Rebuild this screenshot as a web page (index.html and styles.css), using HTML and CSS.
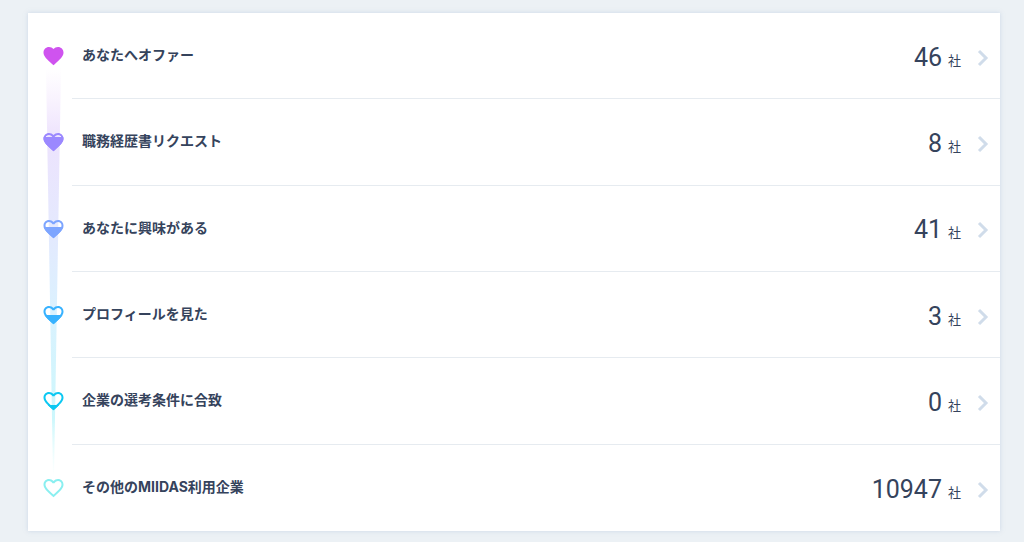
FILE: index.html
```html
<!DOCTYPE html>
<html lang="ja">
<head>
    <meta charset="UTF-8">
    <meta name="viewport" content="width=device-width, initial-scale=1.0">
    <title>MIIDAS</title>
    <link rel="stylesheet" href="styles.css">
</head>
<body>
    <!-- Heart shapes shared by every row -->
    <svg class="defs" width="0" height="0" aria-hidden="true">
        <defs>
            <path id="heart-solid" d="M12 21.35l-1.45-1.32C5.4 15.36 2 12.28 2 8.5 2 5.42 4.42 3 7.5 3c1.74 0 3.41.81 4.5 2.09C13.09 3.81 14.76 3 16.5 3 19.58 3 22 5.42 22 8.5c0 3.78-3.4 6.86-8.55 11.54L12 21.35z"/>
            <path id="heart-line" d="M16.5 3c-1.74 0-3.41.81-4.5 2.09C10.91 3.81 9.24 3 7.5 3 4.42 3 2 5.42 2 8.5c0 3.78 3.4 6.86 8.55 11.54L12 21.35l1.45-1.32C18.6 15.36 22 12.28 22 8.5 22 5.42 19.58 3 16.5 3zm-4.4 15.55l-.1.1-.1-.1C7.14 14.24 4 11.39 4 8.5 4 6.5 5.5 5 7.5 5c1.54 0 3.04.99 3.57 2.36h1.87C13.46 5.99 14.96 5 16.5 5c2 0 3.5 1.5 3.5 3.5 0 2.89-3.14 5.74-7.9 10.05z"/>
            <clipPath id="fill-80"><rect x="0" y="7" width="24" height="17"/></clipPath>
            <clipPath id="fill-60"><rect x="0" y="10" width="24" height="14"/></clipPath>
            <clipPath id="fill-40"><rect x="0" y="12" width="24" height="12"/></clipPath>
            <clipPath id="fill-20"><rect x="0" y="16" width="24" height="8"/></clipPath>
        </defs>
    </svg>

    <main class="card">
        <svg class="beam" viewBox="0 0 15 404" preserveAspectRatio="none" aria-hidden="true">
            <defs>
                <linearGradient id="beam-color" x1="0" y1="0" x2="0" y2="1">
                    <stop offset="0" stop-color="#f3e5fd" stop-opacity="0"/>
                    <stop offset="0.17" stop-color="#ede3fd"/>
                    <stop offset="0.4" stop-color="#e4e9fe"/>
                    <stop offset="0.62" stop-color="#d9f2fe"/>
                    <stop offset="0.86" stop-color="#ccf7fc"/>
                    <stop offset="1" stop-color="#d8fbfb" stop-opacity="0"/>
                </linearGradient>
            </defs>
            <path d="M0 0H15L8 404H7z" fill="url(#beam-color)"/>
        </svg>

        <a class="row offer" href="#">
            <svg class="heart" viewBox="-0.5 0 25 24" aria-hidden="true"><use href="#heart-solid"/></svg>
            <span class="body">
                <span class="label">あなたへオファー</span>
                <span class="count"><span class="number">46</span><span class="unit">社</span></span>
                <svg class="arrow" viewBox="0 0 12 18" aria-hidden="true"><path d="M2 2l7 7-7 7"/></svg>
            </span>
        </a>
        <a class="row request" href="#">
            <svg class="heart" viewBox="-0.5 0 25 24" aria-hidden="true">
                <use href="#heart-line"/>
                <use href="#heart-solid" clip-path="url(#fill-80)"/>
            </svg>
            <span class="body">
                <span class="label">職務経歴書リクエスト</span>
                <span class="count"><span class="number">8</span><span class="unit">社</span></span>
                <svg class="arrow" viewBox="0 0 12 18" aria-hidden="true"><path d="M2 2l7 7-7 7"/></svg>
            </span>
        </a>
        <a class="row interest" href="#">
            <svg class="heart" viewBox="-0.5 0 25 24" aria-hidden="true">
                <use href="#heart-line"/>
                <use href="#heart-solid" clip-path="url(#fill-60)"/>
            </svg>
            <span class="body">
                <span class="label">あなたに興味がある</span>
                <span class="count"><span class="number">41</span><span class="unit">社</span></span>
                <svg class="arrow" viewBox="0 0 12 18" aria-hidden="true"><path d="M2 2l7 7-7 7"/></svg>
            </span>
        </a>
        <a class="row viewed" href="#">
            <svg class="heart" viewBox="-0.5 0 25 24" aria-hidden="true">
                <use href="#heart-line"/>
                <use href="#heart-solid" clip-path="url(#fill-40)"/>
            </svg>
            <span class="body">
                <span class="label">プロフィールを見た</span>
                <span class="count"><span class="number">3</span><span class="unit">社</span></span>
                <svg class="arrow" viewBox="0 0 12 18" aria-hidden="true"><path d="M2 2l7 7-7 7"/></svg>
            </span>
        </a>
        <a class="row matched" href="#">
            <svg class="heart" viewBox="-0.5 0 25 24" aria-hidden="true">
                <use href="#heart-line"/>
                <use href="#heart-solid" clip-path="url(#fill-20)"/>
            </svg>
            <span class="body">
                <span class="label">企業の選考条件に合致</span>
                <span class="count"><span class="number">0</span><span class="unit">社</span></span>
                <svg class="arrow" viewBox="0 0 12 18" aria-hidden="true"><path d="M2 2l7 7-7 7"/></svg>
            </span>
        </a>
        <a class="row other" href="#">
            <svg class="heart" viewBox="-0.5 0 25 24" aria-hidden="true"><use href="#heart-line"/></svg>
            <span class="body">
                <span class="label">その他のMIIDAS利用企業</span>
                <span class="count"><span class="number">10947</span><span class="unit">社</span></span>
                <svg class="arrow" viewBox="0 0 12 18" aria-hidden="true"><path d="M2 2l7 7-7 7"/></svg>
            </span>
        </a>
    </main>
</body>
</html>
```
FILE: styles.css
```css
* {
    margin: 0;
    padding: 0;
    box-sizing: border-box;
}

body {
    min-height: 100vh;
    padding: 13px 24px 11px 28px;
    display: flex;
    background: #ecf1f5;
    color: #35435c;
    font-family: Inter, "Noto Sans CJK JP", sans-serif;
}

.defs {
    position: absolute;
}

/* --- Card --- */
.card {
    position: relative;
    flex: 1;
    display: grid;
    grid-auto-rows: 1fr;
    background: #fff;
    box-shadow: 0 0 4px rgba(170, 190, 215, 0.5);
}

/* Tapered band that runs behind the hearts */
.beam {
    position: absolute;
    left: 18px;
    top: 55px;
    width: 15px;
    height: calc(100% - 110px);
}

/* --- Rows --- */
.row {
    position: relative;
    display: flex;
    align-items: center;
    padding-left: 13px;
    color: inherit;
    text-decoration: none;
}

.heart {
    flex: none;
    width: 25px;
    height: 24px;
    fill: currentColor;
}

.offer .heart { color: #cf53ef; }
.request .heart { color: #9b88ff; }
.interest .heart { color: #7da5ff; }
.viewed .heart { color: #38b2ff; }
.matched .heart { color: #0cc8f2; }
.other .heart { color: #8aeff0; }

.body {
    flex: 1;
    align-self: stretch;
    display: flex;
    align-items: center;
    margin-left: 6px;
    padding: 18px 11px 14px 10px;
    border-bottom: 1px solid #e6ebf0;
}

.row:last-child .body {
    border-bottom: 0;
}

.label {
    flex: 1;
    padding-bottom: 5px;
    font-size: 14px;
    font-weight: bold;
    line-height: 20px;
}

.count {
    display: flex;
    align-items: center;
    gap: 6px;
}

.number {
    font-family: Roboto, sans-serif;
    font-size: 25px;
    line-height: 36px;
}

.unit {
    padding-top: 4px;
    font-size: 13px;
    line-height: 20px;
}

.arrow {
    flex: none;
    width: 12px;
    height: 18px;
    margin-left: 16px;
    fill: none;
    stroke: #d0dcea;
    stroke-width: 3;
}
```
